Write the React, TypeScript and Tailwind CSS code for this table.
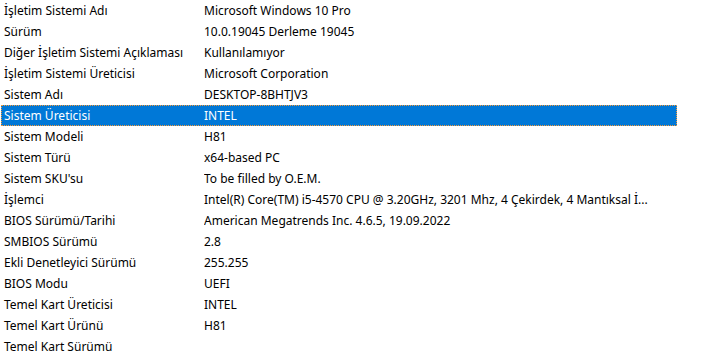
import React from "react";

const rows: [string, string][] = [
  ["İşletim Sistemi Adı", "Microsoft Windows 10 Pro"],
  ["Sürüm", "10.0.19045 Derleme 19045"],
  ["Diğer İşletim Sistemi Açıklaması", "Kullanılamıyor"],
  ["İşletim Sistemi Üreticisi", "Microsoft Corporation"],
  ["Sistem Adı", "DESKTOP-8BHTJV3"],
  ["Sistem Üreticisi", "INTEL"],
  ["Sistem Modeli", "H81"],
  ["Sistem Türü", "x64-based PC"],
  ["Sistem SKU'su", "To be filled by O.E.M."],
  ["İşlemci", "Intel(R) Core(TM) i5-4570 CPU @ 3.20GHz, 3201 Mhz, 4 Çekirdek, 4 Mantıksal İ..."],
  ["BIOS Sürümü/Tarihi", "American Megatrends Inc. 4.6.5, 19.09.2022"],
  ["SMBIOS Sürümü", "2.8"],
  ["Ekli Denetleyici Sürümü", "255.255"],
  ["BIOS Modu", "UEFI"],
  ["Temel Kart Üreticisi", "INTEL"],
  ["Temel Kart Ürünü", "H81"],
  ["Temel Kart Sürümü", ""],
];

export default function App() {
  return (
    <div
      className="w-[721px] h-[359px] bg-white overflow-hidden text-[12px] text-black"
      style={{ fontFamily: "'Noto Sans', 'Open Sans', sans-serif" }}
    >
      <div className="flex flex-col w-[676px] ml-[1px]">
        {rows.map(([k, v], i) => {
          const sel = i === 5;
          return (
            <div
              key={i}
              className={
                "flex h-[21px] items-center " +
                (sel
                  ? "bg-[#0078d7] text-white outline-1 outline-dotted outline-[#f59a3a] -outline-offset-1"
                  : "")
              }
            >
              <div className="w-[203px] pl-[3px] whitespace-nowrap overflow-hidden">{k}</div>
              <div className="flex-1 min-w-0 whitespace-nowrap overflow-hidden">{v}</div>
            </div>
          );
        })}
      </div>
    </div>
  );
}
